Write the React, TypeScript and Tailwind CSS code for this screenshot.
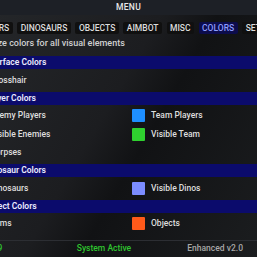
const tabs = ['PLAYERS', 'DINOSAURS', 'OBJECTS', 'AIMBOT', 'MISC', 'COLORS', 'SETTINGS']

interface ColorItem {
  label: string
  color: string
}

interface ColorSection {
  title: string
  items: ColorItem[]
}

const sections: ColorSection[] = [
  { title: 'Interface Colors', items: [{ label: 'Crosshair', color: '#ffffff' }] },
  {
    title: 'Player Colors',
    items: [
      { label: 'Enemy Players', color: '#ff2a2a' },
      { label: 'Team Players', color: '#1e8fff' },
      { label: 'Visible Enemies', color: '#ffd400' },
      { label: 'Visible Team', color: '#2fd12f' },
      { label: 'Corpses', color: '#9a9a9a' }
    ]
  },
  {
    title: 'Dinosaur Colors',
    items: [
      { label: 'Dinosaurs', color: '#ffa500' },
      { label: 'Visible Dinos', color: '#7b8cff' }
    ]
  },
  {
    title: 'Object Colors',
    items: [
      { label: 'Items', color: '#f0f040' },
      { label: 'Objects', color: '#ff5a1a' }
    ]
  }
]

export default function App() {
  return (
    <div className="w-[257px] h-[257px] overflow-hidden bg-[linear-gradient(120deg,#242629_0%,#1c1d20_42%,#111214_56%,#1b1d1f_100%)] font-['Roboto',sans-serif] text-[#e2e2e2]">
      {/* title bar */}
      <div className="h-[15px] bg-[#1d2026] flex items-center justify-center text-[8.5px] font-medium text-[#e8e8e8] tracking-[0.3px]">
        MENU
      </div>

      <div className="ml-[-40px] w-[340px]">
        {/* tabs */}
        <div className="flex gap-[4.5px] pl-[10px] pt-[7px] whitespace-nowrap text-[8.5px] font-medium">
          {tabs.map((t) => (
            <div
              key={t}
              className={`h-[12px] px-[3.5px] flex items-center rounded-[2px] ${
                t === 'COLORS' ? 'bg-[#0c0c4c] text-[#8c9cff]' : 'bg-[#101010] text-[#dcdcdc]'
              }`}
            >
              {t}
            </div>
          ))}
        </div>

        {/* description */}
        <div className="pl-[4px] mt-[4px] h-[11px] text-[9px] font-medium text-[#d0d0d0] leading-[11px] whitespace-nowrap">
          Customize colors for all visual elements
        </div>

        {/* sections */}
        <div className="mt-[7px] pl-[8px]">
          {sections.map((s) => (
            <div key={s.title}>
              <div className="h-[13px] bg-[#0b0b6c] pl-[17px] flex items-center text-[8.5px] font-semibold text-[#ececff]">
                {s.title}
              </div>
              <div className="grid grid-cols-[161px_1fr] py-[2px]">
                {s.items.map((item) => (
                  <div key={item.label} className="h-[18.5px] pl-[3px] flex items-center gap-[6px]">
                    <span className="w-[13px] h-[13px] rounded-[1px]" style={{ backgroundColor: item.color }} />
                    <span className="text-[8.5px] font-medium text-[#dedede]">{item.label}</span>
                  </div>
                ))}
              </div>
            </div>
          ))}
        </div>

        {/* footer */}
        <div className="mt-[5px] ml-[40px] w-[257px] border-t border-[#2c2e33]"></div>
        <div className="pl-[5px] h-[15px]">
          <div className="w-[278px] grid grid-cols-3 items-center h-full text-[8.5px] font-medium">
            <span className="text-left text-[#2fc52f]">Players: 9</span>
            <span className="text-center text-[#2fc52f]">System Active</span>
            <span className="text-right text-[#a8a8a8]">Enhanced v2.0</span>
          </div>
        </div>
      </div>
    </div>
  )
}
